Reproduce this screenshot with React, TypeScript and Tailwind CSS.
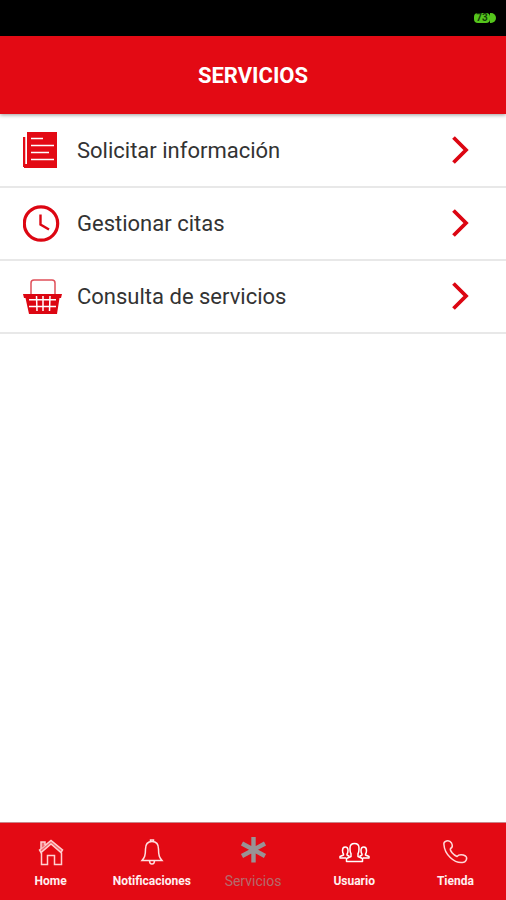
import type { ReactNode } from 'react'

interface Service {
  label: string
  icon: ReactNode
}

interface Tab {
  label: string
  icon: ReactNode
  active?: boolean
}

function DocumentIcon() {
  return (
    <svg className="w-10 h-10" viewBox="0 0 40 40" fill="#e30a14" aria-hidden="true">
      <path d="M0 6h2.500v27H5v3H0z" />
      <path d="M4 1h30v36H1v-4h3z" />
      <path d="M8 7.500h12M8 14.500h23M8 21.500h18M8 28.500h23" stroke="#fff" strokeWidth="1.700" />
      <path d="M3.200 6v27" stroke="#fff" strokeWidth="1.300" />
    </svg>
  )
}

function ClockIcon() {
  return (
    <svg className="w-10 h-10" viewBox="0 0 40 40" fill="none" stroke="#dc0612" aria-hidden="true">
      <circle cx="18" cy="19.500" r="16.700" strokeWidth="3.200" />
      <path d="M17.500 10.500v10l8.500 5" strokeWidth="2.400" />
    </svg>
  )
}

function BasketIcon() {
  return (
    <svg className="w-10 h-10" viewBox="0 0 40 40" aria-hidden="true">
      <path d="M8 18V6q0-3 3-3h18q3 0 3 3v12" fill="none" stroke="#e0505a" strokeWidth="1.500" />
      <path d="M0 17h39l-1 4h-1.500L34 37H6L2.500 21H1z" fill="#dc0612" />
      <path d="M6 22.800h27M6 29.500h27M13.500 19l.5 15M20 19v15M27 19l-.5 15" fill="none" stroke="#fff" strokeWidth="1.500" />
    </svg>
  )
}

function Arrow() {
  return (
    <svg className="w-5 h-8" viewBox="0 0 20 32" fill="none" stroke="#dc0612" strokeWidth="3.800" aria-hidden="true">
      <path d="M3.500 2.500L16 15L3.500 27.500" />
    </svg>
  )
}

function HomeIcon() {
  return (
    <svg className="w-8 h-8" viewBox="0 0 32 32" fill="none" stroke="#ffd0d0" strokeWidth="1.500" aria-hidden="true">
      <path d="M6.500 15.500V27.500H12.500V18.500h7v9H26.500V15.500" />
      <path d="M4.500 13L16 3.500 27.500 13 26 15.500 16 7 6 15.500z" fill="#f26a70" />
      <path d="M6 11.500V5h4v3.500" fill="#f26a70" />
    </svg>
  )
}

function BellIcon() {
  return (
    <svg className="w-8 h-8" viewBox="0 0 32 32" fill="none" stroke="#ffe0e0" strokeWidth="1.500" aria-hidden="true">
      <path d="M16 4.500c-4.500 0-6.500 3-6.500 7.500 0 7-1 8.500-3.500 11.500h20c-2.500-3-3.500-4.500-3.500-11.500 0-4.500-2-7.500-6.500-7.500z" />
      <path d="M14.500 4.500V3h3v1.500M13.500 23.500c0 2.500 1 3.500 2.500 3.500s2.500-1 2.500-3.500" />
    </svg>
  )
}

function AsteriskIcon() {
  return (
    <svg className="w-8 h-8" viewBox="0 0 32 32" fill="none" stroke="#999395" strokeWidth="4.400" aria-hidden="true">
      <path d="M16.500 0v25.500M5 6.500l23 12.500M28 6.500L5 19" />
    </svg>
  )
}

function UsersIcon() {
  return (
    <svg className="w-8 h-8" viewBox="0 0 32 32" fill="none" stroke="#fff" strokeWidth="1.500" strokeLinejoin="round" aria-hidden="true">
      <path d="M8.500 24.500v-3l4.500-2v-3c-1-1-1-2.500-1-5.500 0-3 1.500-4.500 4.500-4.500S21 8 21 11c0 3 0 4.500-1 5.500v3l4.500 2v3z" />
      <path d="M8 21H2v-1.500L5.500 18v-1C4.500 16 4.500 15 4.500 13.500c0-2.500 1-3.500 2.700-3.500s2.800 1 2.800 3.500c0 1.500 0 2.500-1 3.500v1l2.500 1.500" />
      <path d="M25 21h6v-1.500L27.500 18v-1c1-1 1-2 1-3.500 0-2.500-1-3.500-2.700-3.500S23 11 23 13.500c0 1.500 0 2.500 1 3.500v1l-2.500 1.500" />
    </svg>
  )
}

function PhoneIcon() {
  return (
    <svg className="w-8 h-8" viewBox="0 0 32 32" fill="none" stroke="#ffd9d9" strokeWidth="1.500" strokeLinejoin="round" aria-hidden="true">
      <path d="M5 8c-1-4 5-6 7.500-2 1.500 3 1 4.500-1 5.500-1 2 3 6.500 6.500 8 2-2.500 6-2 8.500-.5 2.500 2 .5 6.500-3 6.500C15 26.500 5.500 17 5 8z" />
    </svg>
  )
}

const services: Service[] = [
  { label: 'Solicitar información', icon: <DocumentIcon /> },
  { label: 'Gestionar citas', icon: <ClockIcon /> },
  { label: 'Consulta de servicios', icon: <BasketIcon /> },
]

const tabs: Tab[] = [
  { label: 'Home', icon: <HomeIcon /> },
  { label: 'Notificaciones', icon: <BellIcon /> },
  { label: 'Servicios', icon: <AsteriskIcon />, active: true },
  { label: 'Usuario', icon: <UsersIcon /> },
  { label: 'Tienda', icon: <PhoneIcon /> },
]

export default function App() {
  return (
    <div className="min-h-screen flex flex-col bg-white font-['Roboto',sans-serif]">
      {/* Status bar */}
      <div className="h-9 flex items-center justify-end bg-black pr-2.5">
        <div className="flex items-center">
          <span className="h-2.5 w-4 rounded-sm bg-[#55c51c] text-center text-[10px] leading-[10px] font-bold text-[#123c08]">73</span>
          <span className="h-2.5 w-1.5 rounded-r-full bg-[#55c51c]" />
        </div>
      </div>

      {/* Header */}
      <header className="relative h-[78px] flex items-center justify-center bg-[#e30a14] pt-0.5 shadow-[0_1px_4px_rgba(0,0,0,0.4)]">
        <h1 className="text-[22px] leading-7 font-bold text-white">SERVICIOS</h1>
      </header>

      {/* Services */}
      <main className="flex-1 pt-px">
        <ul>
          {services.map((service) => (
            <li key={service.label} className="border-b-2 border-[#e8e8e8]">
              <a href="#" className="h-[71px] flex items-center pl-[23px] pr-9">
                {service.icon}
                <span className="flex-1 pl-3.5 text-[22px] leading-7 text-[#333333]">{service.label}</span>
                <Arrow />
              </a>
            </li>
          ))}
        </ul>
      </main>

      {/* Tab bar */}
      <nav className="h-[78px] grid grid-cols-5 border-t border-[#c9868a] bg-[#e30a14]">
        {tabs.map((tab) => (
          <a key={tab.label} href="#" className="flex flex-col items-center pt-3.5">
            {tab.icon}
            {tab.active ? (
              <span className="pt-1 text-sm leading-4 text-[#b56a6c]">{tab.label}</span>
            ) : (
              <span className="pt-1 text-xs leading-4 font-bold text-[#fff0f0]">{tab.label}</span>
            )}
          </a>
        ))}
      </nav>
    </div>
  )
}
